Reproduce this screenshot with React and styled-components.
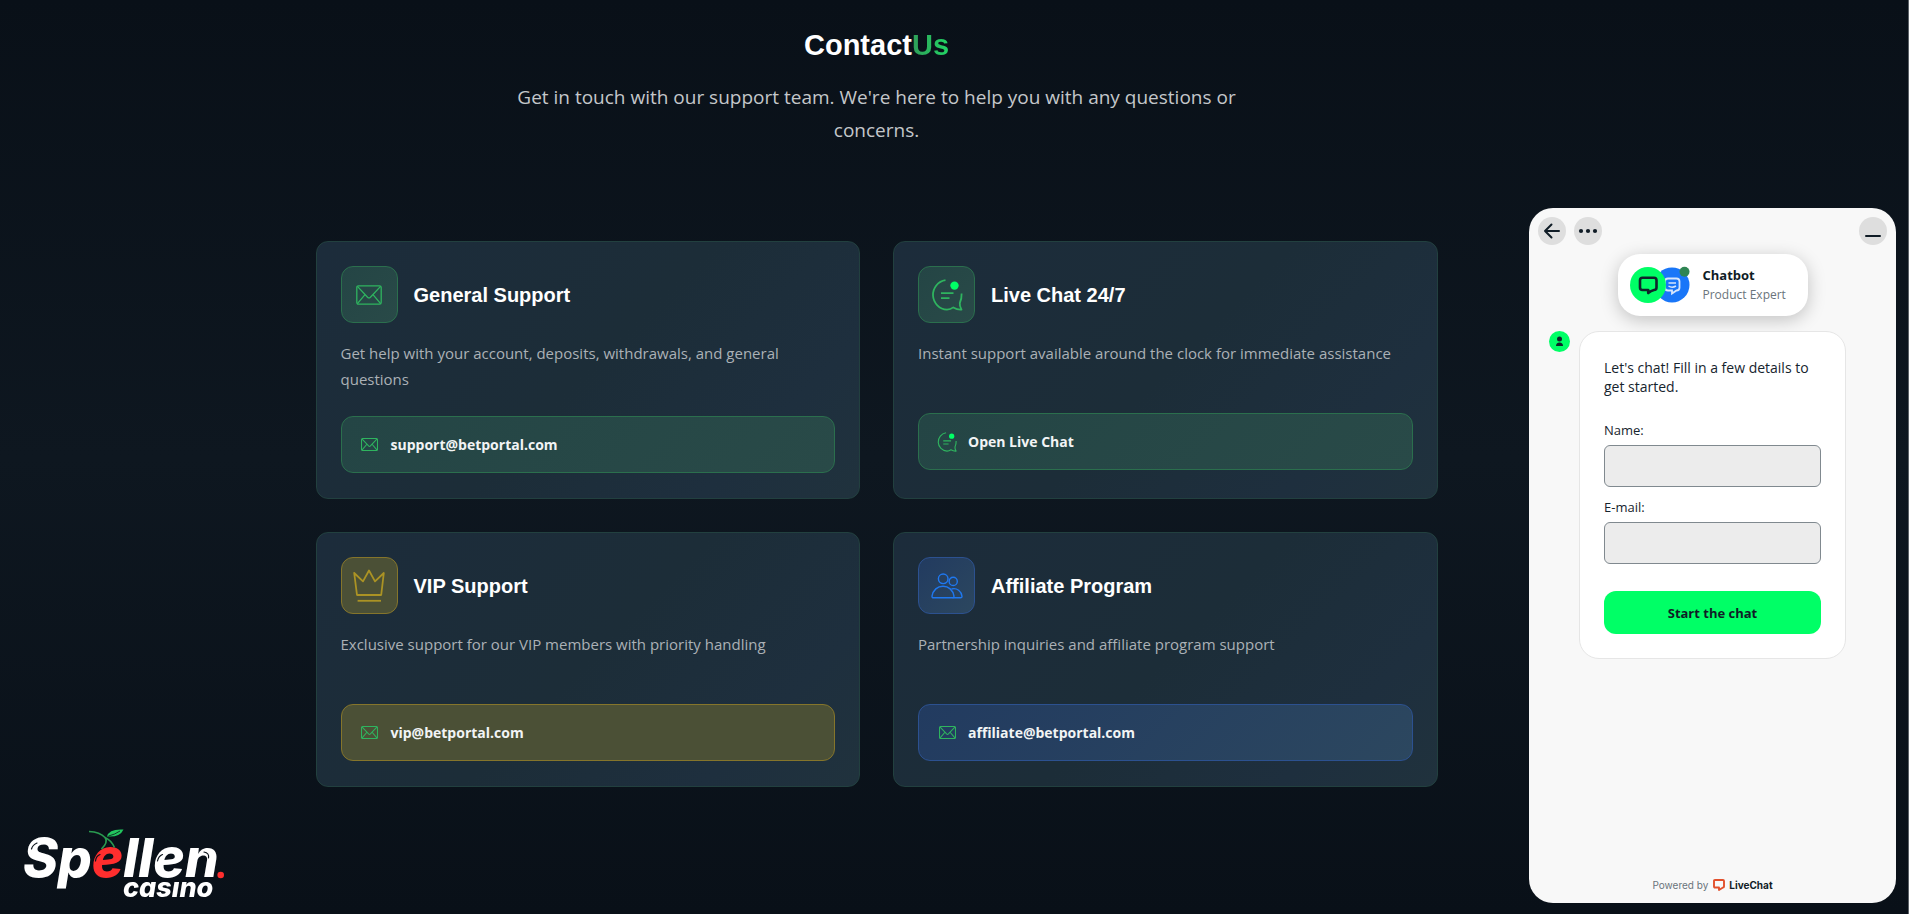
import React from "react";
import styled, { createGlobalStyle } from "styled-components";

const GlobalStyle = createGlobalStyle`
  * {
    box-sizing: border-box;
  }

  body {
    margin: 0;
    background: #0a1118;
    font-family: "Open Sans", "Noto Sans", sans-serif;
  }
`;

const tones = {
  green: {
    background: "linear-gradient(135deg, #244545, #294a48)",
    border: "#2b6f4d",
    icon: "#2fb45f",
  },
  gold: {
    background: "#4b5036",
    border: "#85752b",
    icon: "#ab9324",
  },
  blue: {
    background: "linear-gradient(135deg, #223b60, #2c475f)",
    border: "#2c5190",
    icon: "#1f78f0",
  },
};

const Page = styled.div`
  min-height: 100vh;
  padding: 25px 155px 24px 0;
  background: linear-gradient(180deg, #091018 0%, #0e1720 50%, #091018 100%);
  border-right: 1px solid #5c6268;
`;

const Main = styled.main`
  max-width: 1122px;
  margin: 0 auto;
`;

const Header = styled.header`
  max-width: 780px;
  margin: 0 auto 94px;
  text-align: center;
`;

const Title = styled.h1`
  margin: 0 0 16px;
  font-family: "Liberation Sans", Arial, sans-serif;
  font-size: 29px;
  line-height: 40px;
  color: #fff;
`;

const Accent = styled.span`
  background: linear-gradient(90deg, #2f9e58, #22d565);
  background-clip: text;
  color: transparent;
`;

const Intro = styled.p`
  margin: 0;
  font-size: 19px;
  line-height: 33px;
  color: #c4c7ca;
`;

const CardGrid = styled.div`
  display: grid;
  grid-template-columns: repeat(2, 1fr);
  gap: 33px;
`;

const Card = styled.section`
  padding: 24px 24px 25px;
  background: linear-gradient(135deg, #1c2c3b 0%, #1c2d38 50%, #1e2f3e 80%, #20323d 100%);
  border: 1px solid #22403f;
  border-radius: 12px;
`;

const CardHeader = styled.div`
  display: flex;
  align-items: center;
  gap: 16px;
  margin-bottom: 17px;
`;

const IconTile = styled.div`
  display: grid;
  place-items: center;
  width: 57px;
  height: 57px;
  color: ${({ $tone }) => tones[$tone].icon};
  background: ${({ $tone }) => tones[$tone].background};
  border: 1px solid ${({ $tone }) => tones[$tone].border};
  border-radius: 12px;
`;

const CardTitle = styled.h2`
  margin: 0;
  font-family: "Liberation Sans", Arial, sans-serif;
  font-size: 20px;
  line-height: 28px;
  color: #fff;
`;

const Description = styled.p`
  min-height: 49px;
  margin: 0 0 24px;
  font-size: 15px;
  line-height: 26px;
  color: #abb1b6;
`;

const contactStyles = `
  display: flex;
  align-items: center;
  gap: 11px;
  width: 100%;
  height: 57px;
  padding: 0 18px;
  font-family: inherit;
  font-size: 14px;
  font-weight: 700;
  color: #f2f4f5;
  text-decoration: none;
  border-radius: 12px;
  cursor: pointer;
`;

const ContactLink = styled.a`
  ${contactStyles}
  background: ${({ $tone }) => tones[$tone].background};
  border: 1px solid ${({ $tone }) => tones[$tone].border};
`;

const ContactButton = styled.button`
  ${contactStyles}
  background: ${({ $tone }) => tones[$tone].background};
  border: 1px solid ${({ $tone }) => tones[$tone].border};
`;

const ContactIcon = styled.span`
  display: grid;
  place-items: center;
  width: 20px;
  color: #2fb45f;
`;

const BrandLogo = styled.a`
  position: fixed;
  bottom: 0;
  left: 10px;
  line-height: 0;
`;

const ChatPanel = styled.aside`
  position: fixed;
  right: 13px;
  bottom: 11px;
  display: flex;
  flex-direction: column;
  width: 367px;
  height: 76vh;
  min-height: 600px;
  padding: 9px;
  background: #f8f8f8;
  border-radius: 24px;
  color: #16242e;
`;

const ChatToolbar = styled.div`
  display: flex;
  gap: 8px;
`;

const RoundButton = styled.button`
  display: grid;
  place-items: center;
  width: 28px;
  height: 28px;
  margin-left: ${({ $end }) => ($end ? "auto" : "0")};
  padding: 0;
  color: #101c26;
  background: #dedede;
  border: none;
  border-radius: 50%;
  cursor: pointer;
`;

const AgentCard = styled.div`
  display: flex;
  align-items: center;
  align-self: center;
  gap: 12px;
  width: 190px;
  height: 62px;
  margin-top: 9px;
  padding: 0 12px;
  background: #fff;
  border-radius: 22px;
  box-shadow: 0 4px 18px rgba(0, 0, 0, 0.22);
`;

const AgentText = styled.div`
  font-size: 12px;
  line-height: 20px;
  color: #6a747b;
  white-space: nowrap;
`;

const AgentName = styled.div`
  font-size: 13px;
  font-weight: 700;
  color: #101c26;
`;

const Conversation = styled.div`
  display: flex;
  align-items: flex-start;
  gap: 9px;
  margin: 15px 41px 0 11px;
`;

const Avatar = styled.div`
  display: grid;
  flex: none;
  place-items: center;
  width: 21px;
  height: 21px;
  background: #00ff66;
  border-radius: 50%;
`;

const Form = styled.form`
  flex: 1;
  padding: 26px 24px 24px;
  background: #fff;
  border: 1px solid #e6e6e6;
  border-radius: 20px;
`;

const FormIntro = styled.p`
  margin: 0 0 24px;
  font-size: 14px;
  line-height: 19px;
`;

const Label = styled.label`
  display: block;
  margin-bottom: 5px;
  font-size: 13px;
  line-height: 20px;
`;

const Input = styled.input`
  display: block;
  width: 100%;
  height: 42px;
  margin-bottom: 10px;
  padding: 0 12px;
  font: inherit;
  background: #ececec;
  border: 1px solid #80898f;
  border-radius: 6px;
`;

const SubmitButton = styled.button`
  display: block;
  width: 100%;
  height: 43px;
  margin-top: 27px;
  font-family: inherit;
  font-size: 13px;
  font-weight: 700;
  color: #101c26;
  background: #00ff66;
  border: none;
  border-radius: 12px;
  cursor: pointer;
`;

const PoweredBy = styled.div`
  display: flex;
  align-items: center;
  justify-content: center;
  gap: 5px;
  margin-top: auto;
  font-family: Inter, sans-serif;
  font-size: 10px;
  line-height: 18px;
  color: #6a747b;
`;

const PoweredLink = styled.a`
  display: flex;
  align-items: center;
  gap: 4px;
  font-weight: 700;
  color: #101c26;
  text-decoration: none;
`;

function MailIcon({ width = 26 }) {
  return (
    <svg
      width={width}
      viewBox="0 0 26 20"
      fill="none"
      stroke="currentColor"
      strokeWidth={width > 20 ? 1.3 : 1.6}
      strokeLinejoin="round"
    >
      <rect x="0.8" y="0.8" width="24.4" height="18.4" rx="1.6" />
      <path d="M1.4 1.4 11.6 12.2Q13 13.6 14.4 12.2L24.6 1.4" />
      <path d="M1.4 18.6 9 9.6M24.6 18.6 17 9.6" />
    </svg>
  );
}

function ChatIcon({ width = 32 }) {
  return (
    <svg
      width={width}
      viewBox="0 0 32 32"
      fill="none"
      stroke="currentColor"
      strokeWidth="1.8"
      strokeLinejoin="round"
    >
      <path d="M14.5 1.2A14.8 14.8 0 0 0 16 30.6Q19.5 30.6 22.3 28.4Q26.5 31 30.5 30.6Q28.4 27 28.8 24Q30.8 20 30.6 14.5" />
      <path d="M10 14.2H22.5M10 19.2H18.5" />
      <circle cx="23.5" cy="6.6" r="4.2" fill="#00ff66" stroke="none" />
    </svg>
  );
}

function CrownIcon() {
  return (
    <svg width="32" viewBox="0 0 32 33" fill="none" stroke="currentColor" strokeWidth="1.8" strokeLinejoin="round">
      <path d="M1.2 4 10 12.4 16 1.5 22 12.4 30.8 4 28.2 26H4Z" />
      <path d="M4.6 31.8H28" />
    </svg>
  );
}

function PeopleIcon() {
  return (
    <svg width="32" viewBox="0 0 32 26" fill="none" stroke="currentColor" strokeWidth="1.4" strokeLinejoin="round">
      <circle cx="12.2" cy="5.8" r="4.8" />
      <circle cx="22.2" cy="8.4" r="4.1" />
      <path d="M2.5 24.8Q1 24.8 1 23.2C2 17 6.5 13.2 12 13.2S22 17 23 23.2Q23 24.8 21.5 24.8Z" />
      <path d="M20.5 16C26 14.5 30.5 18.5 31 23.4Q31 24.8 29.5 24.8H21.5" />
    </svg>
  );
}

function AgentAvatars() {
  return (
    <svg width="61" height="38" viewBox="0 0 61 38" fill="none">
      <circle cx="42" cy="19" r="17.5" fill="#1976f8" />
      <path
        d="M38 12.5H46.5Q49.5 12.5 49.5 15.5V21.5Q49.5 24.5 46.5 24.5L42 27.5V24.5H38Q35 24.5 35 21.5V15.5Q35 12.5 38 12.5Z"
        stroke="#d7e6fb"
        strokeWidth="1.8"
      />
      <path d="M38.5 17H46M38.5 20Q42 22.5 46 20" stroke="#d7e6fb" strokeWidth="1.5" />
      <circle cx="18" cy="19" r="18" fill="#00ff66" />
      <path
        d="M12.5 11.8H24Q26.5 11.8 26.5 14.3V21.5Q26.5 24 24 24Q21 24.6 18.2 27V24H12.5Q10 24 10 21.5V14.3Q10 11.8 12.5 11.8Z"
        stroke="#10242a"
        strokeWidth="2.6"
        strokeLinejoin="round"
      />
      <circle cx="54.5" cy="5.8" r="5" fill="#2f8553" />
    </svg>
  );
}

function SpellenLogo() {
  return (
    <svg width="230" height="99" viewBox="0 0 230 99" fill="none">
      <g fontFamily="Inter, sans-serif" fontStyle="italic" fontWeight="800" fill="#fff">
        <text x="13" y="62" fontSize="53">
          Sp<tspan fill="#ff2e2e">e</tspan>llen
        </text>
        <text x="113" y="82" fontSize="27">
          casıno
        </text>
      </g>
      <circle cx="210.7" cy="60" r="3.3" fill="#ff2e2e" />
      <path d="M79 16.5Q90 17 95 22.5Q98.5 27 91.5 34M95 22.5Q101 25 104.5 32.5" stroke="#2a9a50" strokeWidth="1.6" />
      <path d="M97 21.5Q99 13.5 113.5 14.5Q110 22.5 97 21.5Z" fill="#22c55e" />
      <path d="M98.5 21Q105 19.5 110 16" stroke="#0b131b" strokeWidth="0.8" />
      <g stroke="#0b131b" strokeWidth="1.2" strokeLinecap="round">
        <path d="M21.5 34Q22.5 30 27 28" />
        <path d="M85.5 46Q86 41 90 39.5" />
        <path d="M147.5 46Q148.5 41 152.5 39.5" />
        <path d="M194 37Q199.5 38 198.5 43" />
      </g>
    </svg>
  );
}

const icons = {
  mail: MailIcon,
  chat: ChatIcon,
  crown: CrownIcon,
  people: PeopleIcon,
};

const channels = [
  {
    title: "General Support",
    text: "Get help with your account, deposits, withdrawals, and general questions",
    icon: "mail",
    tone: "green",
    email: "support@betportal.com",
  },
  {
    title: "Live Chat 24/7",
    text: "Instant support available around the clock for immediate assistance",
    icon: "chat",
    tone: "green",
  },
  {
    title: "VIP Support",
    text: "Exclusive support for our VIP members with priority handling",
    icon: "crown",
    tone: "gold",
    email: "vip@betportal.com",
  },
  {
    title: "Affiliate Program",
    text: "Partnership inquiries and affiliate program support",
    icon: "people",
    tone: "blue",
    email: "affiliate@betportal.com",
  },
];

function ContactCard({ title, text, icon, tone, email }) {
  const Icon = icons[icon];
  return (
    <Card>
      <CardHeader>
        <IconTile $tone={tone}>
          <Icon />
        </IconTile>
        <CardTitle>{title}</CardTitle>
      </CardHeader>
      <Description>{text}</Description>
      {email ? (
        <ContactLink $tone={tone} href={`mailto:${email}`}>
          <ContactIcon>
            <MailIcon width={17} />
          </ContactIcon>
          {email}
        </ContactLink>
      ) : (
        <ContactButton $tone={tone} type="button">
          <ContactIcon>
            <ChatIcon width={20} />
          </ContactIcon>
          Open Live Chat
        </ContactButton>
      )}
    </Card>
  );
}

function ChatWidget() {
  return (
    <ChatPanel>
      <ChatToolbar>
        <RoundButton type="button" aria-label="Back">
          <svg width="18" height="18" viewBox="0 0 18 18" fill="none" stroke="currentColor" strokeWidth="2" strokeLinecap="round" strokeLinejoin="round">
            <path d="M16 9H2M8.5 2.5 2 9 8.5 15.5" />
          </svg>
        </RoundButton>
        <RoundButton type="button" aria-label="More options">
          <svg width="20" height="6" viewBox="0 0 20 6" fill="currentColor">
            <circle cx="3" cy="3" r="2.1" />
            <circle cx="10" cy="3" r="2.1" />
            <circle cx="17" cy="3" r="2.1" />
          </svg>
        </RoundButton>
        <RoundButton $end type="button" aria-label="Minimize">
          <svg width="18" height="18" viewBox="0 0 18 18" stroke="currentColor" strokeWidth="2" strokeLinecap="round">
            <path d="M2 14H16" />
          </svg>
        </RoundButton>
      </ChatToolbar>
      <AgentCard>
        <AgentAvatars />
        <AgentText>
          <AgentName>Chatbot</AgentName>
          Product Expert
        </AgentText>
      </AgentCard>
      <Conversation>
        <Avatar>
          <svg width="9" height="11" viewBox="0 0 9 11" fill="#10242a">
            <circle cx="4.5" cy="3" r="2.5" />
            <path d="M1 10Q1 6.5 4.5 6.5T8 10Z" />
          </svg>
        </Avatar>
        <Form onSubmit={(event) => event.preventDefault()}>
          <FormIntro>Let's chat! Fill in a few details to get started.</FormIntro>
          <Label htmlFor="name">Name:</Label>
          <Input id="name" type="text" />
          <Label htmlFor="email">E-mail:</Label>
          <Input id="email" type="email" />
          <SubmitButton type="submit">Start the chat</SubmitButton>
        </Form>
      </Conversation>
      <PoweredBy>
        Powered by
        <PoweredLink href="#livechat">
          <svg width="12" height="12" viewBox="0 0 12 12" fill="none" stroke="#e2502c" strokeWidth="1.9" strokeLinejoin="round">
            <path d="M2 1H10Q11 1 11 2V7.5Q11 8.5 10 8.5L6 11V8.5H2Q1 8.5 1 7.5V2Q1 1 2 1Z" />
          </svg>
          LiveChat
        </PoweredLink>
      </PoweredBy>
    </ChatPanel>
  );
}

export default function App() {
  return (
    <>
      <GlobalStyle />
      <Page>
        <Main>
          <Header>
            <Title>
              Contact<Accent>Us</Accent>
            </Title>
            <Intro>
              Get in touch with our support team. We're here to help you with any questions or concerns.
            </Intro>
          </Header>
          <CardGrid>
            {channels.map((channel) => (
              <ContactCard key={channel.title} {...channel} />
            ))}
          </CardGrid>
        </Main>
      </Page>
      <BrandLogo href="#home" aria-label="Spellen casino">
        <SpellenLogo />
      </BrandLogo>
      <ChatWidget />
    </>
  );
}
